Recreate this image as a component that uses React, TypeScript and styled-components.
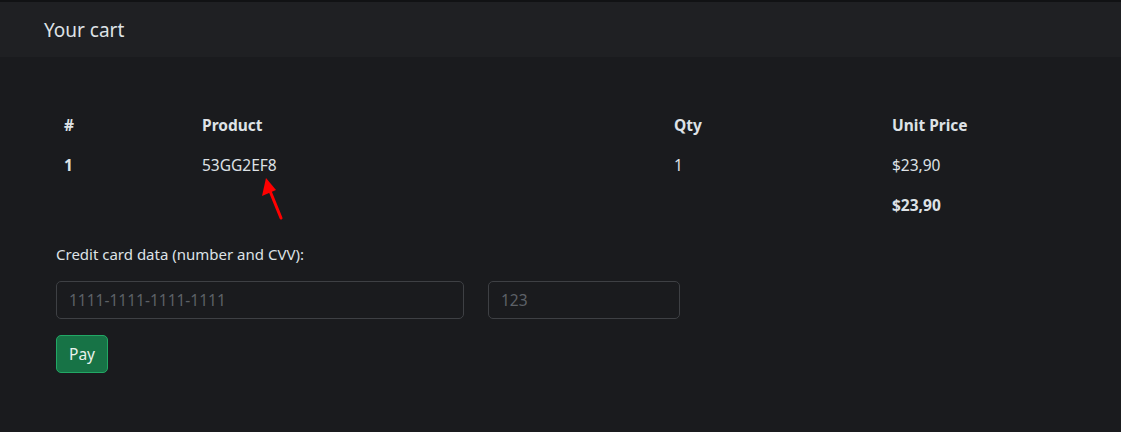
import React from "react";
import styled, { createGlobalStyle } from "styled-components";

const GlobalStyle = createGlobalStyle`
  html, body {
    margin: 0;
    padding: 0;
    background: #1a1b1e;
    font-family: "Noto Sans", "Open Sans", sans-serif;
    color: #dee2e6;
  }
  * { box-sizing: border-box; }
`;

const Page = styled.div`
  width: 1121px;
  height: 432px;
  border-top: 2px solid #111214;
  background: #1a1b1e;
  overflow: hidden;
`;

const CardHeader = styled.div`
  height: 55px;
  display: flex;
  align-items: center;
  padding: 0 44px;
  background: #1f2023;
  font-size: 19px;
  color: #dee2e6;
`;

const CardBody = styled.div`
  position: relative;
  padding: 48px 56px 0;
`;

const Table = styled.div`
  display: grid;
  grid-template-columns: 138px 472px 218px 181px;
  width: 1009px;
`;

const Cell = styled.div<{ $bold?: boolean }>`
  height: 40px;
  padding: 0 8px;
  display: flex;
  align-items: center;
  font-size: 15.5px;
  font-weight: ${(p) => (p.$bold ? 700 : 400)};
  color: #dee2e6;
`;

const Label = styled.div`
  margin-top: 17px;
  height: 24px;
  line-height: 24px;
  font-size: 15px;
  color: #dee2e6;
`;

const InputRow = styled.div`
  display: flex;
  gap: 24px;
  margin-top: 15px;
`;

const Input = styled.input<{ $w: number }>`
  width: ${(p) => p.$w}px;
  height: 38px;
  padding: 0 12px;
  background: #1a1b1e;
  border: 1px solid #3e4044;
  border-radius: 5px;
  color: #dee2e6;
  font-family: inherit;
  font-size: 15.5px;
  outline: none;
  &::placeholder {
    color: #5d6167;
  }
`;

const PayButton = styled.button`
  margin-top: 16px;
  height: 38px;
  padding: 0 12px;
  background: #177346;
  border: 1px solid #22a865;
  border-radius: 5px;
  color: #e9f2ec;
  font-family: inherit;
  font-size: 15.5px;
`;

const Arrow = styled.svg`
  position: absolute;
  left: 258px;
  top: 120px;
`;

const App: React.FC = () => {
  return (
    <Page>
      <GlobalStyle />
      <CardHeader>Your cart</CardHeader>
      <CardBody>
        <Table>
          <Cell $bold>#</Cell>
          <Cell $bold>Product</Cell>
          <Cell $bold>Qty</Cell>
          <Cell $bold>Unit Price</Cell>

          <Cell $bold>1</Cell>
          <Cell>53GG2EF8</Cell>
          <Cell>1</Cell>
          <Cell>$23,90</Cell>

          <Cell />
          <Cell />
          <Cell />
          <Cell $bold>$23,90</Cell>
        </Table>

        <Label>Credit card data (number and CVV):</Label>
        <InputRow>
          <Input $w={408} placeholder="1111-1111-1111-1111" />
          <Input $w={192} placeholder="123" />
        </InputRow>
        <PayButton>Pay</PayButton>

        <Arrow width="30" height="46" viewBox="0 0 30 46">
          <line x1="23" y1="41" x2="12" y2="14" stroke="#f00" strokeWidth="3" strokeLinecap="round" />
          <polygon points="8,1 4,19 18,13" fill="#f00" />
        </Arrow>
      </CardBody>
    </Page>
  );
};

export default App;
